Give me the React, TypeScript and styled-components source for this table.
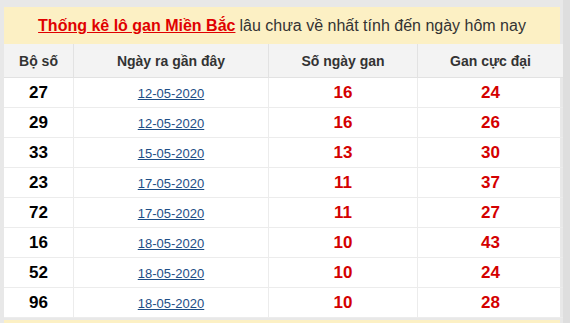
import styled, { createGlobalStyle } from 'styled-components'

const GlobalStyle = createGlobalStyle`
  html, body {
    margin: 0;
    padding: 0;
    background: #e8e8e8;
    font-family: "Liberation Sans", Arial, sans-serif;
    overflow: hidden;
  }
`

const Page = styled.div`
  width: 570px;
  height: 323px;
  padding: 7px 10px 0 4px;
  box-sizing: border-box;
  background: linear-gradient(to right, #e8e8e8 0, #e8e8e8 563px, #dedede 563px);
`

const Card = styled.div`
  width: 556px;
  background: #fff;
`

const TitleBar = styled.div`
  height: 37px;
  background: #fcf0c4;
  display: flex;
  align-items: center;
  justify-content: center;
  font-size: 16px;
  color: #333;
  white-space: nowrap;
`

const TitleLink = styled.a`
  color: #e00000;
  font-weight: bold;
  text-decoration: underline;
  margin-right: 4px;
`

const Table = styled.table`
  width: 100%;
  border-collapse: collapse;
  table-layout: fixed;
`

const HeadCell = styled.th<{ $w: number }>`
  width: ${({ $w }) => $w}px;
  height: 33px;
  padding: 0;
  background: #f3f3f3;
  color: #333;
  font-size: 14px;
  font-weight: bold;
  text-align: center;
  border-left: 1px solid #e2e2e2;
  border-bottom: 1px solid #e2e2e2;
  &:first-child {
    border-left: none;
  }
`

const Cell = styled.td`
  height: 29px;
  padding: 0;
  text-align: center;
  border-left: 1px solid #ececec;
  border-bottom: 1px solid #ececec;
  &:first-child {
    border-left: none;
  }
`

const Num = styled.span<{ $red?: boolean }>`
  font-size: 17px;
  font-weight: bold;
  color: ${({ $red }) => ($red ? '#d40000' : '#000')};
`

const DateLink = styled.a`
  font-size: 13px;
  color: #1d4e86;
  text-decoration: underline;
`

const Footer = styled.div`
  margin-top: 2px;
  width: 556px;
  height: 10px;
  background: #fcf0c4;
`

const rows = [
  ['27', '12-05-2020', '16', '24'],
  ['29', '12-05-2020', '16', '26'],
  ['33', '15-05-2020', '13', '30'],
  ['23', '17-05-2020', '11', '37'],
  ['72', '17-05-2020', '11', '27'],
  ['16', '18-05-2020', '10', '43'],
  ['52', '18-05-2020', '10', '24'],
  ['96', '18-05-2020', '10', '28'],
]

export default function App() {
  return (
    <>
      <GlobalStyle />
      <Page>
        <Card>
          <TitleBar>
            <TitleLink>Thống kê lô gan Miền Bắc</TitleLink>
            lâu chưa về nhất tính đến ngày hôm nay
          </TitleBar>
          <Table>
            <thead>
              <tr>
                <HeadCell $w={69}>Bộ số</HeadCell>
                <HeadCell $w={194}>Ngày ra gần đây</HeadCell>
                <HeadCell $w={148}>Số ngày gan</HeadCell>
                <HeadCell $w={145}>Gan cực đại</HeadCell>
              </tr>
            </thead>
            <tbody>
              {rows.map(([n, d, g, m], i) => (
                <tr key={i}>
                  <Cell><Num>{n}</Num></Cell>
                  <Cell><DateLink>{d}</DateLink></Cell>
                  <Cell><Num $red>{g}</Num></Cell>
                  <Cell><Num $red>{m}</Num></Cell>
                </tr>
              ))}
            </tbody>
          </Table>
        </Card>
        <Footer />
      </Page>
    </>
  )
}
